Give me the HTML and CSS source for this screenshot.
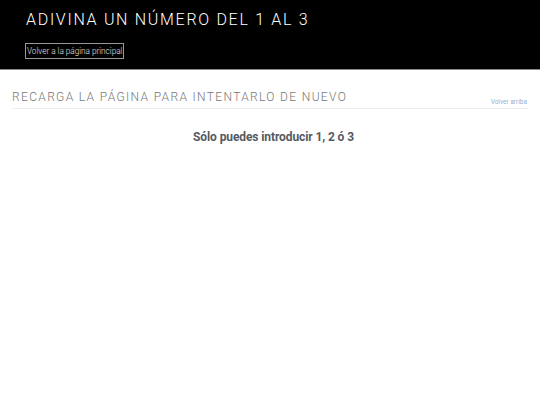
FILE: index.html
```html
<!DOCTYPE html>
<html lang="es">
<head>
<meta charset="utf-8">
<link rel="stylesheet" href="styles.css">
</head>
<body>
<header class="top">
  <h1 class="title">ADIVINA UN NÚMERO DEL 1 AL 3</h1>
  <a class="back" href="#">Volver a la página principal</a>
</header>
<main class="content">
  <div class="section-head">
    <h2 class="section-title">RECARGA LA PÁGINA PARA INTENTARLO DE NUEVO</h2>
    <a class="up" href="#">Volver arriba</a>
  </div>
  <p class="msg">Sólo puedes introducir 1, 2 ó 3</p>
</main>
</body>
</html>
```
FILE: styles.css
```css
html, body { margin: 0; padding: 0; background: #fff; }
body { font-family: Roboto, "Liberation Sans", sans-serif; }
.top {
  background: #000;
  height: 69px;
  border-bottom: 1px solid #888;
  padding: 0 26px;
  display: flex;
  flex-direction: column;
  align-items: flex-start;
}
.title {
  margin: 10px 0 0 0;
  font-weight: 300;
  font-size: 16px;
  letter-spacing: 1.7px;
  color: #fff;
  line-height: 20px;
}
.back {
  margin-top: 13px;
  margin-left: -1px;
  color: #e6e6e6;
  text-decoration: none;
  font-size: 8.2px;
  line-height: 12px;
  border: 1px solid #999;
  padding: 1px 1px;
  font-weight: 300;
}
.content { padding: 0 12px; }
.section-head {
  display: flex;
  justify-content: space-between;
  align-items: flex-end;
  border-bottom: 1px solid #eee;
  margin-top: 20px;
  padding-bottom: 3px;
}
.section-title {
  margin: 0;
  font-weight: 300;
  font-size: 12px;
  letter-spacing: 1.35px;
  color: #777;
  line-height: 15px;
}
.up {
  font-size: 6.5px;
  color: #8ab4d8;
  text-decoration: none;
  line-height: 8px;
  margin-right: 1px;
  margin-bottom: -1px;
}
.msg {
  margin: 20px 0 0 0;
  padding-left: 7px;
  text-align: center;
  font-weight: 700;
  font-size: 12px;
  letter-spacing: -0.1px;
  color: #555a60;
  line-height: 16px;
}
```
